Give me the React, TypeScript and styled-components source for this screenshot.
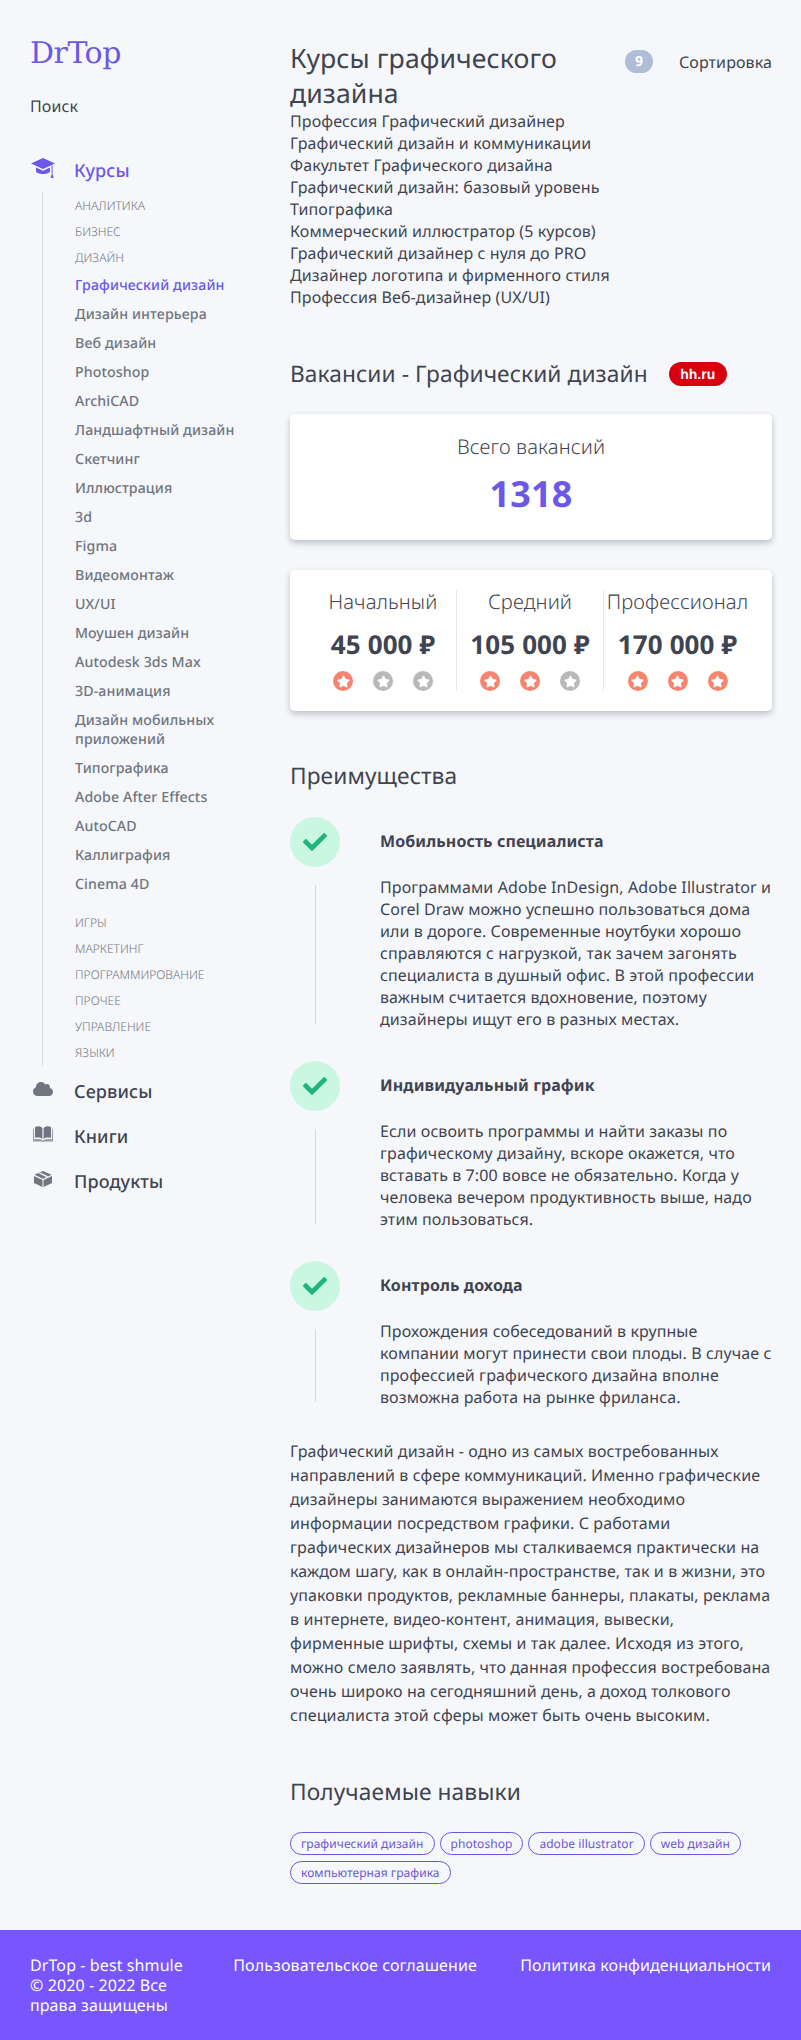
import React from "react";
import styled, { createGlobalStyle } from "styled-components";
import { FaCloud, FaCheck, FaStar } from "react-icons/fa";

const Global = createGlobalStyle`
  * { box-sizing: border-box; }
  html, body { margin: 0; padding: 0; background: #f5f7fa; }
  body { font-family: "Noto Sans", "Open Sans", sans-serif; color: #3f4450; text-rendering: geometricPrecision; letter-spacing: 0.1px; }
`;
const Page = styled.div`display: flex; flex-direction: column; min-height: 2040px;`;
const Columns = styled.div`display: flex; flex: 1; padding: 0 29px 0 30px;`;
const Sidebar = styled.aside`width: 260px; flex: none; padding-top: 33px;`;
const Logo = styled.div`font-family: "DejaVu Serif", serif; font-size: 30px; line-height: 42px; color: #6b57e8; letter-spacing: -0.5px;`;
const Search = styled.div`font-size: 16px; line-height: 22px; margin-top: 20px;`;
const TopItem = styled.div<{ $active?: boolean }>`
  display: flex; align-items: center; height: 45px; font-size: 18px; font-weight: 500;
  color: ${(p) => (p.$active ? "#6b57e8" : "#3f4450")};
`;
const IconSlot = styled.span<{ $active?: boolean }>`
  width: 25px; margin-right: 19px; flex: none; display: flex; justify-content: center; position: relative; top: -3px;
  color: ${(p) => (p.$active ? "#6b57e8" : "#70757f")};
  svg { display: block; }
`;
const Courses = styled(TopItem)`margin-top: 31px;`;
const Sub = styled.div`margin: 0 0 3px 12px; padding: 0 0 0 32px; border-left: 1px solid #d9dce1;`;
const Caps = styled.div`font-size: 12px; font-weight: 300; line-height: 26px; color: #70757f; letter-spacing: 0;`;
const Link = styled.div<{ $active?: boolean }>`
  font-size: 14.2px; line-height: 19px; padding: 5px 0; font-weight: 500;
  color: ${(p) => (p.$active ? "#6b57e8" : "#70757f")};
  width: 170px;
`;
const LinkGroup = styled.div`margin-bottom: 11px;`;
const Main = styled.main`flex: 1; min-width: 0; padding-top: 41px;`;
const Head = styled.div`display: flex; align-items: flex-start;`;
const Title = styled.h1`margin: 0; flex: 1; font-size: 26.6px; line-height: 34.5px; font-weight: 400;`;
const Count = styled.span`
  width: 28px; height: 23px; border-radius: 12px; background: #aebdd8; color: #fff;
  font-size: 14px; font-weight: 700; display: flex; align-items: center; justify-content: center; margin: 9px 26px 0 0;
`;
const Sort = styled.span`font-size: 16px; line-height: 22px; margin-top: 10px;`;
const CourseList = styled.div`font-size: 16px; line-height: 22px;`;
const VacHead = styled.div`display: flex; align-items: center; margin-top: 51px;`;
const H2 = styled.h2`margin: 0; font-size: 22.7px; line-height: 30px; font-weight: 400;`;
const HH = styled.span`
  margin-left: 21px; background: #d6000f; color: #fff; font-family: "Liberation Sans", sans-serif;
  font-size: 14px; font-weight: 700; width: 58px; height: 24px; border-radius: 12px; letter-spacing: 0;
  display: flex; align-items: center; justify-content: center;
`;
const Card = styled.div`background: #fff; border-radius: 5px; box-shadow: 0 3px 6px rgba(40, 50, 70, 0.28);`;
const TotalCard = styled(Card)`margin-top: 25px; height: 126px; padding-top: 19px; text-align: center;`;
const Label = styled.div`font-size: 20.2px; font-weight: 300; line-height: 27px;`;
const Total = styled.div`font-size: 36px; font-weight: 700; line-height: 49px; margin-top: 9px; color: #6b57e8;`;
const LevelCard = styled(Card)`margin-top: 30px; height: 141px; display: flex; padding: 20px;`;
const Level = styled.div<{ $sep?: boolean }>`
  width: 147px; text-align: center; flex: none;
  border-right: ${(p) => (p.$sep ? "1px solid #e6e8ec" : "none")};
`;
const LevelName = styled(Label)`margin-top: -2px;`;
const Salary = styled.div`font-size: 26px; font-weight: 700; line-height: 35px; margin-top: 12px;`;
const Stars = styled.div`display: flex; justify-content: center; gap: 20px; margin-top: 9px;`;
const Star = styled.span<{ $on?: boolean }>`
  width: 20px; height: 20px; border-radius: 50%; background: ${(p) => (p.$on ? "#f8836f" : "#b9b9b9")};
  display: flex; align-items: center; justify-content: center; color: #fff;
  svg { width: 13px; height: 13px; }
`;
const Advantages = styled(H2)`margin-top: 50px;`;
const Adv = styled.div`display: flex; margin-top: 26px; & + & { margin-top: 31px; }`;
const Marker = styled.div`width: 50px; flex: none; margin-right: 40px; display: flex; flex-direction: column; align-items: center;`;
const Check = styled.div`
  width: 50px; height: 50px; border-radius: 50%; background: #c9f7e2; color: #21b57a;
  display: flex; align-items: center; justify-content: center;
  svg { width: 24px; height: 24px; }
`;
const Rail = styled.div`flex: 1; width: 1px; background: #d5d8dd; margin-top: 18px; margin-bottom: 6px;`;
const AdvBody = styled.div`flex: 1; min-width: 0;`;
const AdvTitle = styled.div`font-size: 16px; font-weight: 700; line-height: 22px; margin-top: 13px;`;
const AdvText = styled.div`font-size: 16px; line-height: 22px; margin-top: 24px;`;
const Article = styled.p`font-size: 16px; line-height: 24px; margin: 31px 0 0;`;
const Skills = styled(H2)`margin-top: 50px;`;
const Tags = styled.div`display: flex; flex-wrap: wrap; gap: 6px 5px; margin-top: 25px; width: 470px;`;
const Tag = styled.span`
  font-size: 12px; line-height: 21px; padding: 0 10px; border: 1px solid #6b57d8; border-radius: 12px; color: #6b57d8; letter-spacing: 0.05px;
`;
const Footer = styled.footer`
  height: 110px; background: #7755ff; color: #fff; padding: 25px 30px 0; display: flex;
  justify-content: space-between; font-size: 16px; line-height: 20px; flex: none;
`;
const Copy = styled.div`width: 160px;`;

const CapIcon = () => (
  <svg width="24" height="20" viewBox="0 0 24 20" fill="currentColor">
    <path d="M12 0 24 5.5 12 11 0 5.5Z" />
    <path d="M5 9.5 12 12.7 19 9.5V13C19 15 15.5 16 12 16S5 15 5 13Z" />
    <path d="M20.6 7.5h1v7.5h-1z" />
    <path d="M21.1 14.5 22.6 20H19.6Z" />
  </svg>
);
const BookIcon = () => (
  <svg width="20" height="16" viewBox="0 0 20 16" fill="currentColor">
    <path d="M2 1C4.5 0 7.5 0 9.4 2V13C7.5 11.4 4.5 11.2 2 12Z" />
    <path d="M18 1C15.5 0 12.500 0 10.6 2V13C12.500 11.4 15.500 11.2 18 12Z" />
    <path opacity="0.7" d="M0 3H1V13.500C4 12.800 7.500 12.800 10 14.500 12.500 12.800 16 12.800 19 13.500V3H20V15.500H11.500L10 16 8.500 15.500H0Z" />
  </svg>
);
const BoxIcon = () => (
  <svg width="18" height="16" viewBox="0 0 18 16" fill="currentColor">
    <path d="M9 0 17.500 3.800 9 7.800 .5 3.800Z" />
    <path d="M0 5 8.500 9V16L0 12Z" />
    <path d="M18 5 9.500 9V16L18 12Z" />
    <path d="M4.300 1.900 5.600 1.300 14 5.200 13.500 6.600 12.500 6.200Z" fill="#f5f7fa" />
  </svg>
);

const sideLinks = ["Графический дизайн","Дизайн интерьера","Веб дизайн","Photoshop","ArchiCAD","Ландшафтный дизайн","Скетчинг","Иллюстрация","3d","Figma","Видеомонтаж","UX/UI","Моушен дизайн","Autodesk 3ds Max","3D-анимация","Дизайн мобильных приложений","Типографика","Adobe After Effects","AutoCAD","Каллиграфия","Cinema 4D"];
const courses = ["Профессия Графический дизайнер","Графический дизайн и коммуникации","Факультет Графического дизайна","Графический дизайн: базовый уровень","Типографика","Коммерческий иллюстратор (5 курсов)","Графический дизайнер с нуля до PRO","Дизайнер логотипа и фирменного стиля","Профессия Веб-дизайнер (UX/UI)"];
const levels = [
  { n: "Начальный", s: "45 000 ₽", on: 1 },
  { n: "Средний", s: "105 000 ₽", on: 2 },
  { n: "Профессионал", s: "170 000 ₽", on: 3 },
];
const advs = [
  { t: "Мобильность специалиста", d: "Программами Adobe InDesign, Adobe Illustrator и Corel Draw можно успешно пользоваться дома или в дороге. Современные ноутбуки хорошо справляются с нагрузкой, так зачем загонять специалиста в душный офис. В этой профессии важным считается вдохновение, поэтому дизайнеры ищут его в разных местах." },
  { t: "Индивидуальный график", d: "Если освоить программы и найти заказы по графическому дизайну, вскоре окажется, что вставать в 7:00 вовсе не обязательно. Когда у человека вечером продуктивность выше, надо этим пользоваться." },
  { t: "Контроль дохода", d: "Прохождения собеседований в крупные компании могут принести свои плоды. В случае с профессией графического дизайна вполне возможна работа на рынке фриланса." },
];
const tags = ["графический дизайн","photoshop","adobe illustrator","web дизайн","компьютерная графика"];

export default function App() {
  return (
    <Page>
      <Global />
      <Columns>
        <Sidebar>
          <Logo>DrTop</Logo>
          <Search>Поиск</Search>
          <Courses $active><IconSlot $active><CapIcon /></IconSlot>Курсы</Courses>
          <Sub>
            {["АНАЛИТИКА","БИЗНЕС","ДИЗАЙН"].map((c) => <Caps key={c}>{c}</Caps>)}
            <LinkGroup>
              {sideLinks.map((l, i) => <Link key={l} $active={i === 0}>{l}</Link>)}
            </LinkGroup>
            {["ИГРЫ","МАРКЕТИНГ","ПРОГРАММИРОВАНИЕ","ПРОЧЕЕ","УПРАВЛЕНИЕ","ЯЗЫКИ"].map((c) => <Caps key={c}>{c}</Caps>)}
          </Sub>
          <TopItem><IconSlot><FaCloud size={20} /></IconSlot>Сервисы</TopItem>
          <TopItem><IconSlot><BookIcon /></IconSlot>Книги</TopItem>
          <TopItem><IconSlot><BoxIcon /></IconSlot>Продукты</TopItem>
        </Sidebar>
        <Main>
          <Head>
            <Title>Курсы графического дизайна</Title>
            <Count>9</Count>
            <Sort>Сортировка</Sort>
          </Head>
          <CourseList>{courses.map((c) => <div key={c}>{c}</div>)}</CourseList>
          <VacHead><H2>Вакансии - Графический дизайн</H2><HH>hh.ru</HH></VacHead>
          <TotalCard><Label>Всего вакансий</Label><Total>1318</Total></TotalCard>
          <LevelCard>
            {levels.map((l, i) => (
              <Level key={l.n} $sep={i < 2}>
                <LevelName>{l.n}</LevelName>
                <Salary>{l.s}</Salary>
                <Stars>{[0,1,2].map((k) => <Star key={k} $on={k < l.on}><FaStar /></Star>)}</Stars>
              </Level>
            ))}
          </LevelCard>
          <Advantages>Преимущества</Advantages>
          {advs.map((a) => (
            <Adv key={a.t}>
              <Marker><Check><FaCheck /></Check><Rail /></Marker>
              <AdvBody><AdvTitle>{a.t}</AdvTitle><AdvText>{a.d}</AdvText></AdvBody>
            </Adv>
          ))}
          <Article>Графический дизайн - одно из самых востребованных направлений в сфере коммуникаций. Именно графические дизайнеры занимаются выражением необходимо информации посредством графики. С работами графических дизайнеров мы сталкиваемся практически на каждом шагу, как в онлайн-пространстве, так и в жизни, это упаковки продуктов, рекламные баннеры, плакаты, реклама в интернете, видео-контент, анимация, вывески, фирменные шрифты, схемы и так далее. Исходя из этого, можно смело заявлять, что данная профессия востребована очень широко на сегодняшний день, а доход толкового специалиста этой сферы может быть очень высоким.</Article>
          <Skills>Получаемые навыки</Skills>
          <Tags>{tags.map((t) => <Tag key={t}>{t}</Tag>)}</Tags>
        </Main>
      </Columns>
      <Footer>
        <Copy>DrTop - best shmule © 2020 - 2022 Все права защищены</Copy>
        <div>Пользовательское соглашение</div>
        <div>Политика конфиденциальности</div>
      </Footer>
    </Page>
  );
}
